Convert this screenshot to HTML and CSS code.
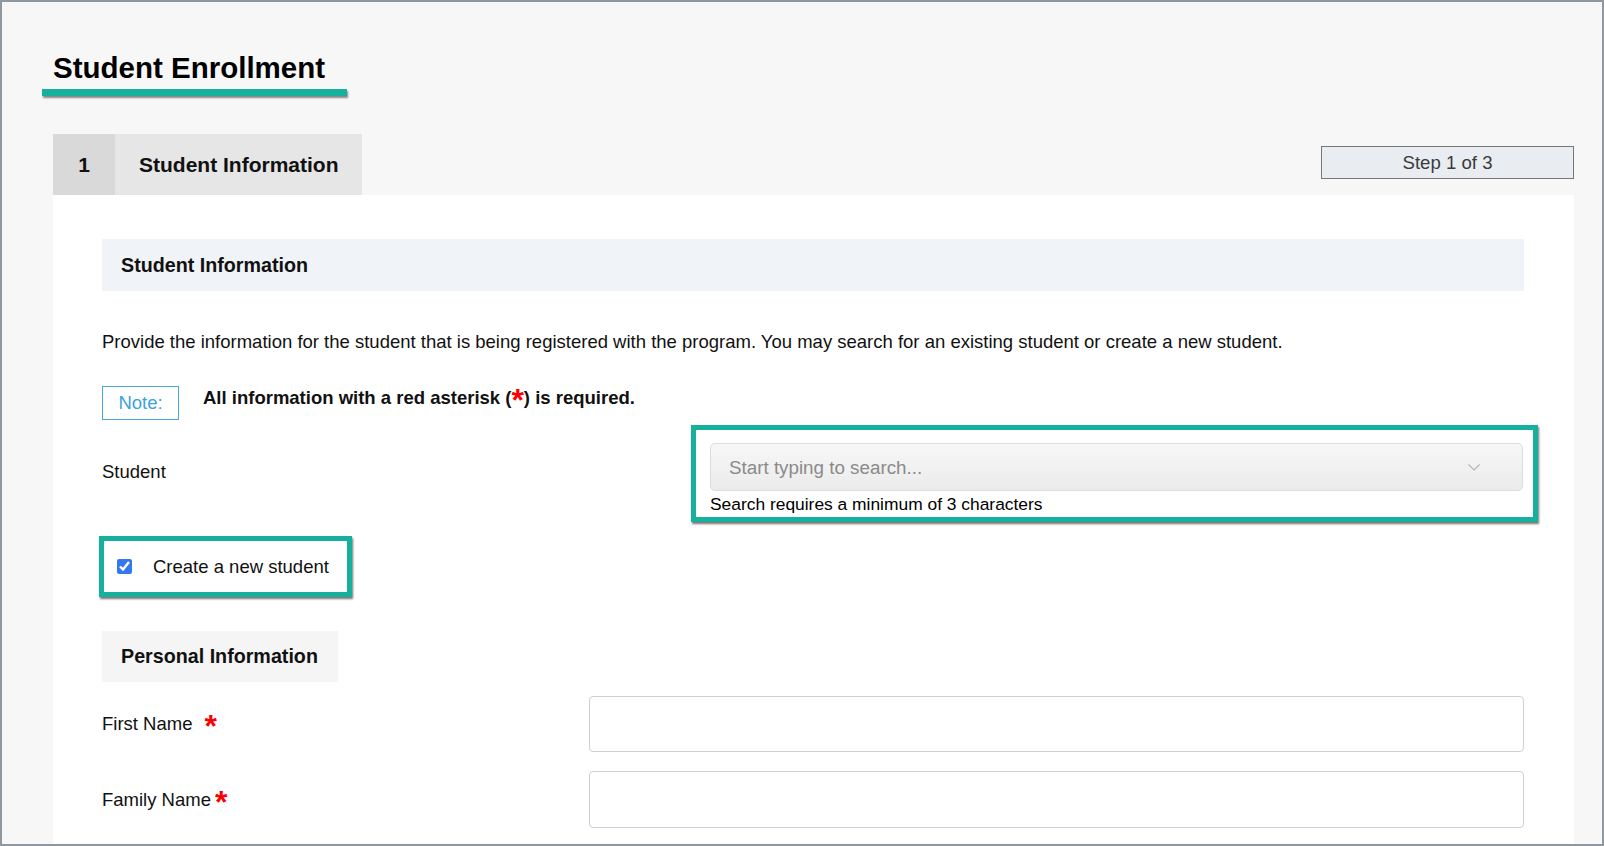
FILE: index.html
```html
<!DOCTYPE html>
<html lang="en">
<head>
    <meta charset="UTF-8">
    <meta name="viewport" content="width=device-width, initial-scale=1.0">
    <title>Student Enrollment</title>
    <link rel="stylesheet" href="styles.css">
</head>
<body>
    <div class="frame">
        <header class="page-head">
            <h1 class="page-title">Student Enrollment</h1>
            <div class="title-bar"></div>
        </header>

        <div class="steps">
            <div class="step-tab">
                <span class="step-num">1</span>
                <span class="step-name">Student Information</span>
            </div>
            <div class="step-count">Step 1 of 3</div>
        </div>

        <main class="panel">
            <h2 class="section-head">Student Information</h2>

            <p class="intro">Provide the information for the student that is being registered with the program. You may search for an existing student or create a new student.</p>

            <div class="note-row">
                <span class="note">Note:</span>
                <strong class="note-text">All information with a red asterisk (<span class="req">*</span>) is required.</strong>
            </div>

            <div class="student-row">
                <label class="field-label">Student</label>
                <div class="highlight search-box">
                    <div class="select">
                        <span class="placeholder">Start typing to search...</span>
                        <svg class="chevron" width="12" height="7" viewBox="0 0 12 7">
                            <polyline points="0.5,0.5 6,6 11.5,0.5" fill="none" stroke="#b4b4b4" stroke-width="1.2"/>
                        </svg>
                    </div>
                    <div class="help">Search requires a minimum of 3 characters</div>
                </div>
            </div>

            <label class="highlight new-student">
                <input type="checkbox" checked>
                <span>Create a new student</span>
            </label>

            <h3 class="sub-head">Personal Information</h3>

            <div class="form-grid">
                <label class="field-label">First Name <span class="req req-spaced">*</span></label>
                <input class="text-input" type="text">
                <label class="field-label">Family Name<span class="req req-near">*</span></label>
                <input class="text-input tall" type="text">
            </div>
        </main>
    </div>
</body>
</html>
```

FILE: styles.css
```css
/* Page frame */
body {
    margin: 0;
}

.frame {
    width: 1604px;
    height: 846px;
    box-sizing: border-box;
    border: 2px solid #8f979f;
    background: #f7f7f7;
    overflow: hidden;
    font-family: "Liberation Sans", Arial, sans-serif;
    color: #111;
}

/* Title */
.page-head {
    padding: 49px 0 0 40px;
}

.page-title {
    margin: 0;
    padding-left: 11px;
    font-size: 29.5px;
    line-height: 34px;
    font-weight: bold;
    color: #000;
}

.title-bar {
    width: 305px;
    height: 7px;
    margin-top: 4px;
    background: #16b09c;
    box-shadow: 1px 2px 2px rgba(0, 0, 0, 0.45);
}

/* Step tabs */
.steps {
    display: flex;
    justify-content: space-between;
    align-items: flex-start;
    margin: 38px 28px 0 51px;
}

.step-tab {
    display: flex;
    height: 61px;
    font-size: 21px;
    font-weight: bold;
    color: #111;
}

.step-num {
    width: 62px;
    background: #d9d9d9;
    display: flex;
    align-items: center;
    justify-content: center;
}

.step-name {
    background: #e6e6e6;
    padding: 0 24px;
    display: flex;
    align-items: center;
}

.step-count {
    margin-top: 12px;
    width: 253px;
    height: 33px;
    box-sizing: border-box;
    border: 1px solid #777;
    background: #e9edf2;
    color: #3a3a3a;
    font-size: 18.6px;
    display: flex;
    align-items: center;
    justify-content: center;
}

/* Panel */
.panel {
    margin: 0 28px 0 51px;
    padding: 44px 50px 40px 49px;
    background: #fff;
}

.section-head {
    margin: 0;
    height: 52px;
    padding-left: 19px;
    background: #f0f3f8;
    font-size: 19.7px;
    font-weight: bold;
    display: flex;
    align-items: center;
}

.intro {
    margin: 39px 0 0;
    font-size: 18.5px;
    line-height: 24px;
}

.note-row {
    display: flex;
    align-items: flex-start;
    gap: 24px;
    margin-top: 32px;
}

.note {
    width: 77px;
    height: 34px;
    box-sizing: border-box;
    border: 1px solid #4aa6dc;
    color: #3aa3dc;
    font-size: 18.5px;
    display: flex;
    align-items: center;
    justify-content: center;
}

.note-text {
    font-size: 18.5px;
    line-height: 24px;
}

.req {
    color: #f00;
    font-weight: bold;
    font-size: 32px;
    line-height: 0;
    vertical-align: -7px;
}

.req-spaced {
    margin-left: 7px;
}

.req-near {
    margin-left: 4px;
}

.field-label {
    font-size: 18.5px;
}

/* Highlighted boxes */
.highlight {
    box-sizing: border-box;
    border: 5px solid #16b09c;
    box-shadow: 1px 2px 2px rgba(0, 0, 0, 0.55);
    background: #fff;
}

.student-row {
    display: flex;
    align-items: center;
    margin-top: 5px;
}

.student-row .field-label {
    flex: 1;
    margin-top: -3px;
}

.search-box {
    width: 847px;
    margin-right: -14px;
    padding: 13px 10px 2px 14px;
}

.select {
    height: 48px;
    box-sizing: border-box;
    border: 1px solid #dcdcdc;
    border-radius: 5px;
    background: linear-gradient(#f7f7f7, #ebebeb);
    display: flex;
    align-items: center;
    justify-content: space-between;
    padding: 0 42px 0 18px;
}

.placeholder {
    color: #8a8a8a;
    font-size: 18.8px;
    margin-top: 2px;
}

.help {
    padding-top: 2px;
    font-size: 17.4px;
    line-height: 22px;
    color: #000;
}

.new-student {
    display: flex;
    align-items: center;
    gap: 21px;
    width: 253px;
    height: 61px;
    margin: 14px 0 0 -3px;
    padding-left: 13px;
    font-size: 18.5px;
}

.new-student input {
    width: 15px;
    height: 15px;
    margin: 0;
    accent-color: #3478f0;
}

.sub-head {
    width: fit-content;
    height: 51px;
    margin: 34px 0 0;
    padding: 0 20px 0 19px;
    background: #f5f5f5;
    font-size: 19.7px;
    font-weight: bold;
    display: flex;
    align-items: center;
}

/* Personal information fields */
.form-grid {
    display: grid;
    grid-template-columns: 487px 1fr;
    align-items: center;
    row-gap: 19px;
    margin-top: 14px;
}

.text-input {
    height: 56px;
    box-sizing: border-box;
    border: 1px solid #cfcfcf;
    border-radius: 4px;
    background: #fff;
}

.text-input.tall {
    height: 57px;
}
```
